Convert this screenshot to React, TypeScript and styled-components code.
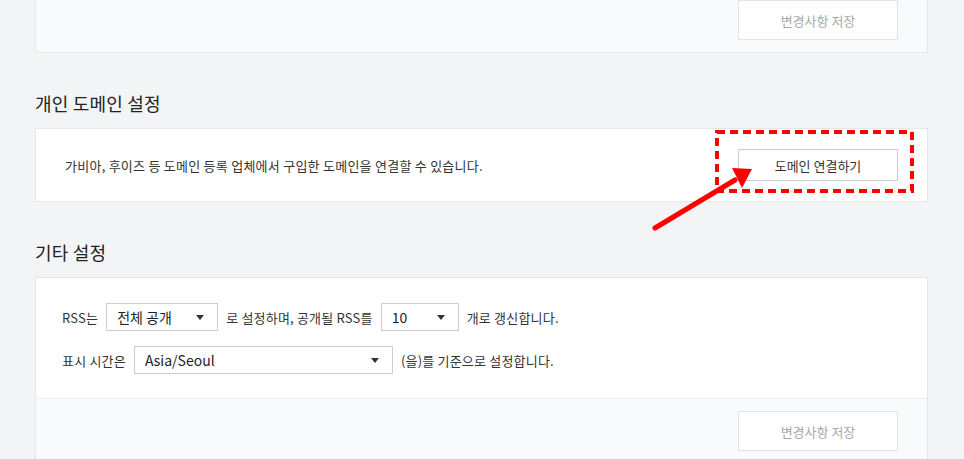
import styled, { createGlobalStyle } from 'styled-components';

const Global = createGlobalStyle`
	html, body {
		margin: 0;
		padding: 0;
		background: #f3f4f6;
	}
	body {
		font-family: 'Noto Sans CJK KR', 'Noto Sans', sans-serif;
		color: #333;
		overflow: hidden;
	}
`;

const Page = styled.div`
	position: relative;
	width: 964px;
	height: 459px;
	overflow: hidden;
`;

const Content = styled.div`
	margin-top: -13px;
	padding: 0 36px 0 35px;
`;

const Card = styled.div<{ $muted?: boolean }>`
	background: ${(p) => (p.$muted ? '#f9fafc' : '#fff')};
	border: 1px solid #e3e6eb;
`;

const Heading = styled.h2`
	margin: 37px 0 12px;
	font-size: 18px;
	font-weight: 400;
	line-height: 26px;
	color: #222;
	letter-spacing: 0.2px;
`;

const InlineBody = styled.div`
	display: flex;
	align-items: center;
	justify-content: space-between;
	padding: 20px 29px 20px 29px;
	font-size: 13px;
	letter-spacing: 0.25px;
`;

const Body = styled.div`
	display: flex;
	flex-direction: column;
	gap: 15px;
	padding: 25px 26px 24px;
	font-size: 13px;
	letter-spacing: 0.2px;
`;

const Row = styled.div`
	display: flex;
	align-items: center;
	gap: 8px;
	height: 28px;
`;

const Footer = styled.div<{ $flush?: boolean }>`
	display: flex;
	justify-content: flex-end;
	padding: 12px 29px 12px;
	background: #f9fafc;
	border-top: ${(p) => (p.$flush ? 'none' : '1px solid #eceef2')};
`;

const Button = styled.button<{ $disabled?: boolean }>`
	width: 160px;
	height: ${(p) => (p.$disabled ? '40px' : '32px')};
	background: #fff;
	border: 1px solid ${(p) => (p.$disabled ? '#dfe3ea' : '#c7ccd5')};
	color: ${(p) => (p.$disabled ? '#a5a8ad' : '#333')};
	font-family: inherit;
	font-size: 13px;
	cursor: pointer;
	padding: 0;
`;

const Select = styled.div<{ $w: number }>`
	position: relative;
	box-sizing: border-box;
	width: ${(p) => p.$w}px;
	height: 28px;
	display: flex;
	align-items: center;
	padding-left: 10px;
	background: #fff;
	border: 1px solid #c9ced6;
	font-size: 14px;
	letter-spacing: 0;
	color: #222;
	&::after {
		content: '';
		position: absolute;
		right: 13px;
		top: 11px;
		border-left: 4px solid transparent;
		border-right: 4px solid transparent;
		border-top: 5px solid #333;
	}
`;

const Annotation = styled.svg`
	position: absolute;
	left: 0;
	top: 0;
	pointer-events: none;
`;

export default function App() {
	return (
		<Page>
			<Global />
			<Content>
				<Card $muted>
					<Footer $flush>
						<Button $disabled>변경사항 저장</Button>
					</Footer>
				</Card>

				<Heading>개인 도메인 설정</Heading>
				<Card>
					<InlineBody>
						<span>가비아, 후이즈 등 도메인 등록 업체에서 구입한 도메인을 연결할 수 있습니다.</span>
						<Button>도메인 연결하기</Button>
					</InlineBody>
				</Card>

				<Heading>기타 설정</Heading>
				<Card>
					<Body>
						<Row>
							<span>RSS는</span>
							<Select $w={112}>전체 공개</Select>
							<span>로 설정하며, 공개될 RSS를</span>
							<Select $w={78}>10</Select>
							<span>개로 갱신합니다.</span>
						</Row>
						<Row>
							<span>표시 시간은</span>
							<Select $w={259}>Asia/Seoul</Select>
							<span>(을)를 기준으로 설정합니다.</span>
						</Row>
					</Body>
					<Footer>
						<Button $disabled>변경사항 저장</Button>
					</Footer>
				</Card>
			</Content>

			<Annotation width={964} height={459} viewBox="0 0 964 459">
				<rect x={717} y={132} width={195} height={59} fill="none" stroke="#f00" strokeWidth={4} strokeDasharray="8 5" />
				<line x1={655} y1={228} x2={735} y2={180} stroke="#f00" strokeWidth={5} strokeLinecap="round" />
				<polygon points="752,169 732,168 742,188" fill="#f00" />
			</Annotation>
		</Page>
	);
}
